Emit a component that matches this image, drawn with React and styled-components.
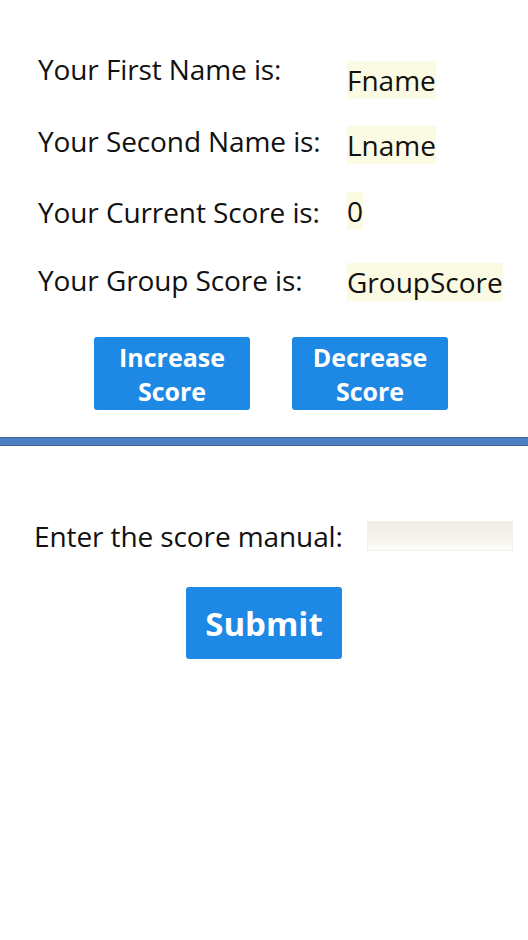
import React, { useState } from 'react';
import styled, { createGlobalStyle } from 'styled-components';

const GlobalStyle = createGlobalStyle`
  body {
    margin: 0;
    background: #fff;
    font-family: 'Open Sans', 'Noto Sans', sans-serif;
    color: #111;
  }
`;

const rows = [
  { label: 'Your First Name is:', value: 'Fname', height: 70, labelTop: 0, valueTop: 11 },
  { label: 'Your Second Name is:', value: 'Lname', height: 70, labelTop: 2, valueTop: 6 },
  { label: 'Your Current Score is:', value: '0', height: 68, labelTop: 3, valueTop: 2 },
  { label: 'Your Group Score is:', value: 'GroupScore', height: 44, labelTop: 3, valueTop: 5 },
];

const App = () => {
  const [score, setScore] = useState(0);
  const [manual, setManual] = useState('');

  return (
    <Page>
      <GlobalStyle />
      <Info>
        {rows.map(row => (
          <Row key={row.label} $height={row.height}>
            <Label $top={row.labelTop}>{row.label}</Label>
            <Value $top={row.valueTop}>
              {row.value === '0' ? score : row.value}
            </Value>
          </Row>
        ))}
      </Info>
      <Buttons>
        <ScoreButton onClick={() => setScore(s => s + 1)}>
          Increase
          <br />
          Score
        </ScoreButton>
        <ScoreButton onClick={() => setScore(s => s - 1)}>
          Decrease
          <br />
          Score
        </ScoreButton>
      </Buttons>
      <Divider />
      <Manual>
        <ManualRow>
          <ManualLabel>Enter the score manual:</ManualLabel>
          <ManualInput value={manual} onChange={e => setManual(e.target.value)} />
        </ManualRow>
        <SubmitButton>Submit</SubmitButton>
      </Manual>
    </Page>
  );
};

export default App;

const Page = styled.div`
  display: flex;
  flex-direction: column;
  width: 528px;
  min-height: 940px;
`;

const Info = styled.section`
  display: flex;
  flex-direction: column;
  padding: 50px 0 0 38px;
`;

const Row = styled.div`
  display: grid;
  grid-template-columns: 309px auto;
  align-items: start;
  height: ${p => p.$height}px;
`;

const Label = styled.span`
  font-size: 28px;
  line-height: 38px;
  letter-spacing: -0.1px;
  margin-top: ${p => p.$top}px;
`;

const Value = styled.span`
  justify-self: start;
  font-size: 28px;
  line-height: 38px;
  background: #fbfae3;
  margin-top: ${p => p.$top}px;
`;

const Buttons = styled.div`
  display: flex;
  gap: 42px;
  padding: 35px 0 0 94px;
`;

const ScoreButton = styled.button`
  width: 156px;
  height: 73px;
  border: none;
  border-radius: 3px;
  background: #1e88e5;
  color: #fff;
  font-family: 'Open Sans', sans-serif;
  font-weight: 700;
  font-size: 25px;
  line-height: 34px;
  padding: 0;
  cursor: pointer;
`;

const Divider = styled.hr`
  margin: 27px 0 0;
  height: 7px;
  border: none;
  border-top: 1px solid #3c6597;
  border-bottom: 1px solid #3c6597;
  background: #4d80c2;
`;

const Manual = styled.section`
  display: flex;
  flex-direction: column;
  align-items: center;
  padding-top: 71px;
`;

const ManualRow = styled.div`
  display: flex;
  align-items: center;
  align-self: stretch;
  padding-left: 34px;
  gap: 24px;
`;

const ManualLabel = styled.span`
  font-size: 28px;
  line-height: 38px;
  letter-spacing: -0.1px;
`;

const ManualInput = styled.input`
  width: 146px;
  height: 30px;
  box-sizing: border-box;
  border: 1px solid #f2f1ec;
  background: linear-gradient(#efece4, #f8f7f2 85%, #fff 88%, #faf9f6);
  outline: none;
  font-family: 'Open Sans', sans-serif;
  font-size: 18px;
  padding: 0 4px;
`;

const SubmitButton = styled.button`
  margin-top: 32px;
  width: 156px;
  height: 72px;
  border: none;
  border-radius: 3px;
  background: #1e88e5;
  color: #fff;
  font-family: 'Open Sans', sans-serif;
  font-weight: 700;
  font-size: 33px;
  padding: 0;
  cursor: pointer;
`;
